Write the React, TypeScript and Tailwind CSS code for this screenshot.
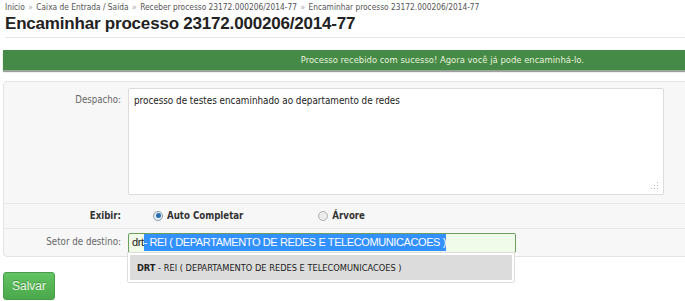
export default function App() {
  const crumbs = [
    "Início",
    "Caixa de Entrada / Saída",
    "Receber processo 23172.000206/2014-77",
    "Encaminhar processo 23172.000206/2014-77",
  ];

  return (
    <div className="w-[685px] h-[301px] overflow-hidden bg-white font-['DejaVu_Sans_Condensed','Liberation_Sans',sans-serif] text-[#333]">
      <div className="flex items-center pl-[5px] pt-[1px] h-[12px] text-[8.3px] leading-[12px] text-[#555]">
        {crumbs.map((c, i) => (
          <span key={c} className="flex items-center">
            {i > 0 && <span className="px-[3.5px] text-[#aaa]">»</span>}
            <span>{c}</span>
          </span>
        ))}
      </div>
      <h1 className="pl-[5px] pt-[1px] font-['Liberation_Sans',Arial,sans-serif] text-[17px] leading-[22px] tracking-[-0.2px] font-bold text-[#222]">
        Encaminhar processo 23172.000206/2014-77
      </h1>
      <div className="ml-[5px] mt-[2px] border-t border-[#e5e5e5]" />

      <div className="ml-[3px] mt-[12px] h-[20px] flex items-center justify-end pr-[101px] bg-[#468a47] shadow-[0_2px_1px_#9aa49a] text-[9.4px] text-[#e6f2dc]">
        Processo recebido com sucesso! Agora você já pode encaminhá-lo.
      </div>

      <div className="relative ml-[3px] mt-[11px] w-[690px] rounded-l-[4px] border border-[#e3e3e3] bg-[#f7f7f7]">
        <div className="flex pt-[6px] pb-[8px] border-b border-[#e8e8e8]">
          <div className="w-[117px] pt-[5px] text-right text-[9.6px] text-[#666]">
            Despacho:
          </div>
          <div className="relative ml-[7px] w-[536px] h-[107px] rounded-[2px] border border-[#dcdcdc] bg-white px-[5px] pt-[5px] text-[9.8px] text-[#222]">
            processo de testes encaminhado ao departamento de redes
            <svg className="absolute right-[4px] bottom-[4px]" width="8" height="8" viewBox="0 0 8 8">
              <g fill="#b5b5b5">
                <rect x="6" y="0" width="1" height="1" />
                <rect x="3" y="3" width="1" height="1" />
                <rect x="6" y="3" width="1" height="1" />
                <rect x="0" y="6" width="1" height="1" />
                <rect x="3" y="6" width="1" height="1" />
                <rect x="6" y="6" width="1" height="1" />
              </g>
            </svg>
          </div>
        </div>

        <div className="flex items-center h-[25px] border-b border-[#e8e8e8] text-[9.6px]">
          <div className="w-[117px] text-right font-bold text-[#333]">Exibir:</div>
          <label className="flex items-center ml-[32px] font-bold text-[#333]">
            <span className="w-[10px] h-[10px] rounded-full border border-[#8a9aa8] bg-[#e8eef3] flex items-center justify-center mr-[4px]">
              <span className="w-[5px] h-[5px] rounded-full bg-[#2a6fb0]" />
            </span>
            Auto Completar
          </label>
          <label className="flex items-center ml-[75px] font-bold text-[#333]">
            <span className="w-[10px] h-[10px] rounded-full border border-[#b0b0b0] bg-[#ececec] mr-[4px]" />
            Árvore
          </label>
        </div>

        <div className="flex items-center h-[27px]">
          <div className="w-[117px] text-right text-[9.7px] text-[#666]">Setor de destino:</div>
          <div className="ml-[7px] w-[388px] h-[20px] flex items-center rounded-[2px] border border-[#6c9f5e] bg-[#f0fbe9] pl-[3px] font-['Liberation_Sans',Arial,sans-serif] text-[11px] tracking-[-0.4px]">
            <span className="text-[#222]">drt</span>
            <span className="bg-[#3390ff] text-white">
              {" "}- REI ( DEPARTAMENTO DE REDES E TELECOMUNICACOES )
            </span>
          </div>
        </div>

        <div className="absolute left-[123px] top-[170px] w-[388px] h-[31px] rounded-b-[2px] border border-[#dedede] bg-white p-[2px]">
          <div className="h-full flex items-center pl-[7px] bg-[#dcdcdc] text-[9.2px] text-[#222]">
            <span className="font-bold">DRT</span>
            <span>&nbsp;- REI ( DEPARTAMENTO DE REDES E TELECOMUNICACOES )</span>
          </div>
        </div>
      </div>

      <button className="ml-[3px] mt-[15px] w-[52px] h-[28px] rounded-[3px] border border-[#4a9c4a] bg-gradient-to-b from-[#62c462] to-[#4aa84a] font-['Liberation_Sans',Arial,sans-serif] text-[12px] text-[#eaf6e4] [text-shadow:0_-1px_0_rgba(0,0,0,0.25)]">
        Salvar
      </button>
    </div>
  );
}
